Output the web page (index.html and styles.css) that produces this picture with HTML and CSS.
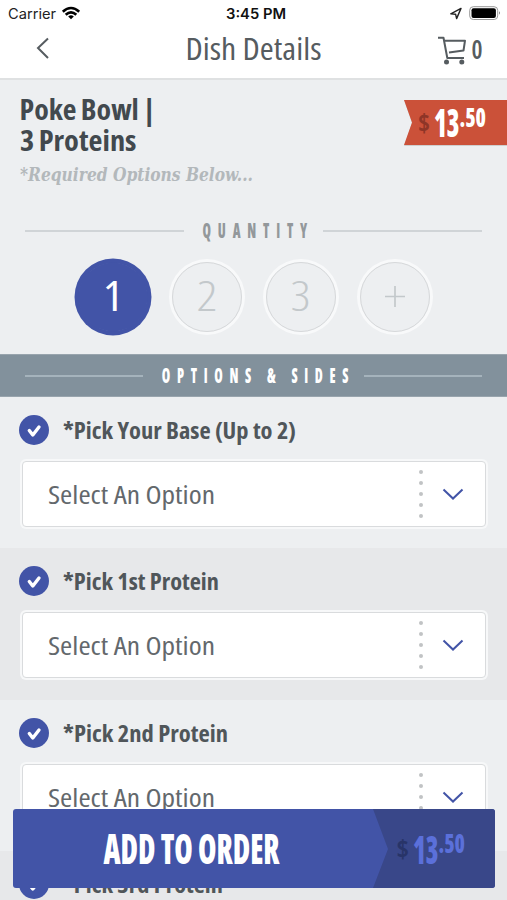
FILE: index.html
```html
<!DOCTYPE html>
<html lang="en">
<head>
<meta charset="utf-8">
<title>Dish Details</title>
<link rel="stylesheet" href="styles.css">
</head>
<body>
<div class="screen">
  <header class="header">
    <svg class="status" viewBox="0 0 507 27">
      <text class="carrier" x="8" y="19" textLength="48" lengthAdjust="spacingAndGlyphs">Carrier</text>
      <g fill="none" stroke="#000" stroke-width="2.6">
        <path d="M62.800 11.800Q71 4.200 79.200 11.800"/>
        <path d="M65.700 14.800Q71 9.800 76.300 14.800"/>
      </g>
      <path d="M68.2 16.600Q71 14 73.8 16.600L71 19.300Z"/>
      <text class="clock" x="226" y="19" textLength="60" lengthAdjust="spacingAndGlyphs">3:45 PM</text>
      <path d="M450.800 13.800L461 8.400L456.600 18.600L455.600 14.200Z" fill="none" stroke="#222" stroke-width="1.400" stroke-linejoin="round"/>
      <rect x="469.700" y="6.700" width="28" height="12.800" rx="3.600" fill="#fff" stroke="#999" stroke-width="1"/>
      <rect x="471.500" y="8.300" width="24.400" height="9.600" rx="2"/>
      <path d="M499 11.300Q501 13 499 14.700Z" fill="#888"/>
    </svg>
    <svg class="nav" viewBox="0 0 507 51">
      <path d="M48 11.500L38 21L48 31" fill="none" stroke="#565c60" stroke-width="2"/>
      <text class="title" x="185.500" y="32.500" textLength="136" lengthAdjust="spacingAndGlyphs">Dish Details</text>
      <g fill="none" stroke="#565c60" stroke-width="2" stroke-linejoin="round">
        <path d="M438 10.800H443.500L447.300 31H464"/>
        <path d="M444.500 13.700H465L463.500 23.500L449 25.500"/>
      </g>
      <circle cx="446.500" cy="35" r="2.500" fill="#565c60"/>
      <circle cx="461.800" cy="35" r="2.500" fill="#565c60"/>
      <text class="count" x="471.500" y="32" textLength="11" lengthAdjust="spacingAndGlyphs">0</text>
    </svg>
  </header>

  <section class="dish">
    <svg class="dish-name" viewBox="0 0 404 114">
      <text class="name" x="19.500" y="40" textLength="136" lengthAdjust="spacingAndGlyphs">Poke Bowl |</text>
      <text class="name" x="20" y="70.500" textLength="116.500" lengthAdjust="spacingAndGlyphs">3 Proteins</text>
      <text class="note" x="20" y="101" textLength="233" lengthAdjust="spacingAndGlyphs">*Required Options Below...</text>
    </svg>
    <svg class="ribbon" viewBox="0 0 103 48">
      <path d="M0 0H103V46H0L8 23Z" fill="#b9b9b9" opacity=".6"/>
      <path d="M0 0H103V45H0L8 22.500Z" fill="#cb5139"/>
      <text class="currency" x="14" y="31.500" textLength="12" lengthAdjust="spacingAndGlyphs">$</text>
      <text class="price"><tspan class="amount" x="30" y="37" textLength="25.500" lengthAdjust="spacingAndGlyphs">13</tspan><tspan class="cents" x="55.500" y="27" textLength="26.500" lengthAdjust="spacingAndGlyphs">.50</tspan></text>
    </svg>
  </section>

  <section class="quantity">
    <div class="divider">
      <span class="rule"></span>
      <svg class="quantity-title" viewBox="0 0 114 30"><text class="spaced" transform="scale(.65 1)" x="8.500" y="22" textLength="161">QUANTITY</text></svg>
      <span class="rule"></span>
    </div>
    <div class="amounts">
      <span class="pill chosen"><svg viewBox="0 0 70 70"><text class="digit" x="25" y="49" textLength="20" lengthAdjust="spacingAndGlyphs">1</text></svg></span>
      <span class="pill"><svg viewBox="0 0 70 70"><text class="digit" x="24.500" y="49" textLength="21" lengthAdjust="spacingAndGlyphs">2</text></svg></span>
      <span class="pill"><svg viewBox="0 0 70 70"><text class="digit" x="24.500" y="49" textLength="20" lengthAdjust="spacingAndGlyphs">3</text></svg></span>
      <span class="pill"><svg viewBox="0 0 70 70"><path d="M25 34.500H45M35 24V45" stroke="#c3c8cb" stroke-width="1.700"/></svg></span>
    </div>
  </section>

  <div class="options-bar divider">
    <span class="rule"></span>
    <svg class="options-title" viewBox="0 0 196 30"><text class="spaced" transform="scale(.65 1)" x="9" y="22" textLength="287">OPTIONS &amp; SIDES</text></svg>
    <span class="rule"></span>
  </div>

  <section class="option">
    <div class="option-head">
      <svg class="check" viewBox="0 0 30 30"><circle cx="15" cy="15" r="15"/><path d="M10.300 15.500L13.800 20L20 12"/></svg>
      <svg class="label" viewBox="0 0 300 32"><text x="0" y="25" textLength="233" lengthAdjust="spacingAndGlyphs">*Pick Your Base (Up to 2)</text></svg>
    </div>
    <div class="select">
      <svg class="select-text" viewBox="0 0 190 64"><text x="0" y="41.500" textLength="167" lengthAdjust="spacingAndGlyphs">Select An Option</text></svg>
      <span class="dots"><i></i><i></i><i></i><i></i><i></i></span>
      <svg class="chevron" viewBox="0 0 22 12"><path d="M1.500 1.500L11 10.500L20.500 1.500"/></svg>
    </div>
  </section>

  <section class="option shaded">
    <div class="option-head">
      <svg class="check" viewBox="0 0 30 30"><circle cx="15" cy="15" r="15"/><path d="M10.300 15.500L13.800 20L20 12"/></svg>
      <svg class="label" viewBox="0 0 300 32"><text x="0" y="25" textLength="156" lengthAdjust="spacingAndGlyphs">*Pick 1st Protein</text></svg>
    </div>
    <div class="select">
      <svg class="select-text" viewBox="0 0 190 64"><text x="0" y="41.500" textLength="167" lengthAdjust="spacingAndGlyphs">Select An Option</text></svg>
      <span class="dots"><i></i><i></i><i></i><i></i><i></i></span>
      <svg class="chevron" viewBox="0 0 22 12"><path d="M1.500 1.500L11 10.500L20.500 1.500"/></svg>
    </div>
  </section>

  <section class="option">
    <div class="option-head">
      <svg class="check" viewBox="0 0 30 30"><circle cx="15" cy="15" r="15"/><path d="M10.300 15.500L13.800 20L20 12"/></svg>
      <svg class="label" viewBox="0 0 300 32"><text x="0" y="25" textLength="165" lengthAdjust="spacingAndGlyphs">*Pick 2nd Protein</text></svg>
    </div>
    <div class="select">
      <svg class="select-text" viewBox="0 0 190 64"><text x="0" y="41.500" textLength="167" lengthAdjust="spacingAndGlyphs">Select An Option</text></svg>
      <span class="dots"><i></i><i></i><i></i><i></i><i></i></span>
      <svg class="chevron" viewBox="0 0 22 12"><path d="M1.500 1.500L11 10.500L20.500 1.500"/></svg>
    </div>
  </section>

  <section class="option shaded">
    <div class="option-head">
      <svg class="check" viewBox="0 0 30 30"><circle cx="15" cy="15" r="15"/><path d="M10.300 15.500L13.800 20L20 12"/></svg>
      <svg class="label" viewBox="0 0 300 32"><text x="0" y="25" textLength="160" lengthAdjust="spacingAndGlyphs">*Pick 3rd Protein</text></svg>
    </div>
  </section>

  <div class="order">
    <svg viewBox="0 0 482 79">
      <path d="M360 0H482V79H360L375 40Z" fill="#394789"/>
      <text class="order-text" x="90.500" y="55" textLength="176" lengthAdjust="spacingAndGlyphs">ADD TO ORDER</text>
      <text class="currency" x="383.500" y="49" textLength="12.500" lengthAdjust="spacingAndGlyphs">$</text>
      <text class="price"><tspan class="amount" x="400" y="54.500" textLength="25.500" lengthAdjust="spacingAndGlyphs">13</tspan><tspan class="cents" x="425.500" y="44" textLength="26.500" lengthAdjust="spacingAndGlyphs">.50</tspan></text>
    </svg>
  </div>
</div>
</body>
</html>
```
FILE: styles.css
```css
* { box-sizing: border-box; }
body { margin: 0; font-family: "Open Sans", "Noto Sans", sans-serif; font-stretch: condensed; }
svg { display: block; flex: none; }
.screen { position: relative; width: 507px; height: 900px; overflow: hidden; background: #edeff1; }

.header { height: 80px; background: #fff; border-bottom: 2px solid #dfe1e2; }
.status { width: 507px; height: 27px; }
.nav { width: 507px; height: 51px; }
.carrier { font: 400 14px Inter, sans-serif; fill: #222; }
.clock { font: 600 14px Inter, sans-serif; fill: #111; }
.title { font-size: 31px; font-weight: 400; fill: #565c60; }
.count { font-size: 27px; font-weight: 600; fill: #565c60; }

.dish { display: flex; height: 134px; }
.dish-name { width: 404px; height: 114px; }
.name { font-size: 28px; font-weight: 700; fill: #42494e; word-spacing: -1px; }
.note { font: italic 700 18.500px "DejaVu Serif", serif; fill: #b3b8bb; }
.ribbon { width: 103px; height: 48px; margin-top: 20px; overflow: visible; }
.ribbon .currency { font-size: 24px; font-weight: 700; fill: #8e3527; }
.amount { font-size: 39px; font-weight: 800; fill: #fff; }
.cents { font-size: 26px; font-weight: 800; fill: #fff; }

.divider { display: flex; align-items: center; justify-content: space-between; padding: 0 25px; }
.rule { height: 2px; background: #d0d4d7; }
.quantity { height: 140px; }
.quantity .divider { height: 33px; }
.quantity .rule { width: 159px; }
.quantity-title { width: 114px; height: 30px; }
.spaced { font-size: 21px; font-weight: 800; fill: #93989b; }
.amounts { display: flex; align-items: center; justify-content: center; gap: 24px; height: 100px; }
.pill { width: 70px; height: 70px; border-radius: 50%; border: 1px solid #d6d8da; box-shadow: 0 0 0 3px #f8f9fa; }
.pill svg { width: 70px; height: 70px; margin: -1px; }
.chosen { border-color: #4254a7; background: #4254a7; box-shadow: 0 0 0 3.500px #4254a7; }
.digit { font-size: 42px; font-weight: 300; fill: #c3c8cb; }
.chosen .digit { font-weight: 400; fill: #fff; }

.options-bar { height: 43px; background: #82919c; border-top: 1px solid #98a4ad; border-bottom: 1px solid #98a4ad; }
.options-bar .rule { width: 118px; background: #a5b3bc; }
.options-title { width: 196px; height: 30px; }
.options-bar .spaced { fill: #fff; }

.option { height: 151.300px; background: #edeff1; }
.shaded { background: #e7e8ea; }
.option-head { display: flex; align-items: center; gap: 14px; height: 64px; padding: 2px 0 0 19px; }
.check { width: 30px; height: 30px; fill: #4254a7; }
.check path { fill: none; stroke: #fff; stroke-width: 3.400; stroke-linecap: round; stroke-linejoin: round; }
.label { width: 300px; height: 32px; }
.label text { font-size: 23.500px; font-weight: 700; fill: #50565a; }
.select { display: flex; align-items: center; width: 464px; height: 66px; margin-left: 22px; padding-left: 24.500px; background: #fff; border: 1px solid #d9dbdd; border-radius: 4px; box-shadow: 0 0 0 2px #f7f8f9; }
.select-text { width: 190px; height: 64px; }
.select-text text { font-size: 25px; fill: #63686c; }
.dots { display: flex; flex-direction: column; justify-content: space-between; width: 4px; height: 48px; margin-left: 181.500px; }
.dots i { width: 4px; height: 4px; border-radius: 50%; background: #c1c3c5; }
.chevron { width: 22px; height: 12px; margin-left: 19px; }
.chevron path { fill: none; stroke: #4254a7; stroke-width: 2; }

.order { position: absolute; left: 13px; top: 808.500px; width: 482px; height: 79px; overflow: hidden; border-radius: 3px; background: #4254a7; }
.order svg { width: 482px; height: 79px; }
.order-text { font-size: 43px; font-weight: 800; fill: #fff; }
.order .currency { font-size: 25px; font-weight: 700; fill: #283468; }
.order .amount, .order .cents { fill: #5b70da; }
```
